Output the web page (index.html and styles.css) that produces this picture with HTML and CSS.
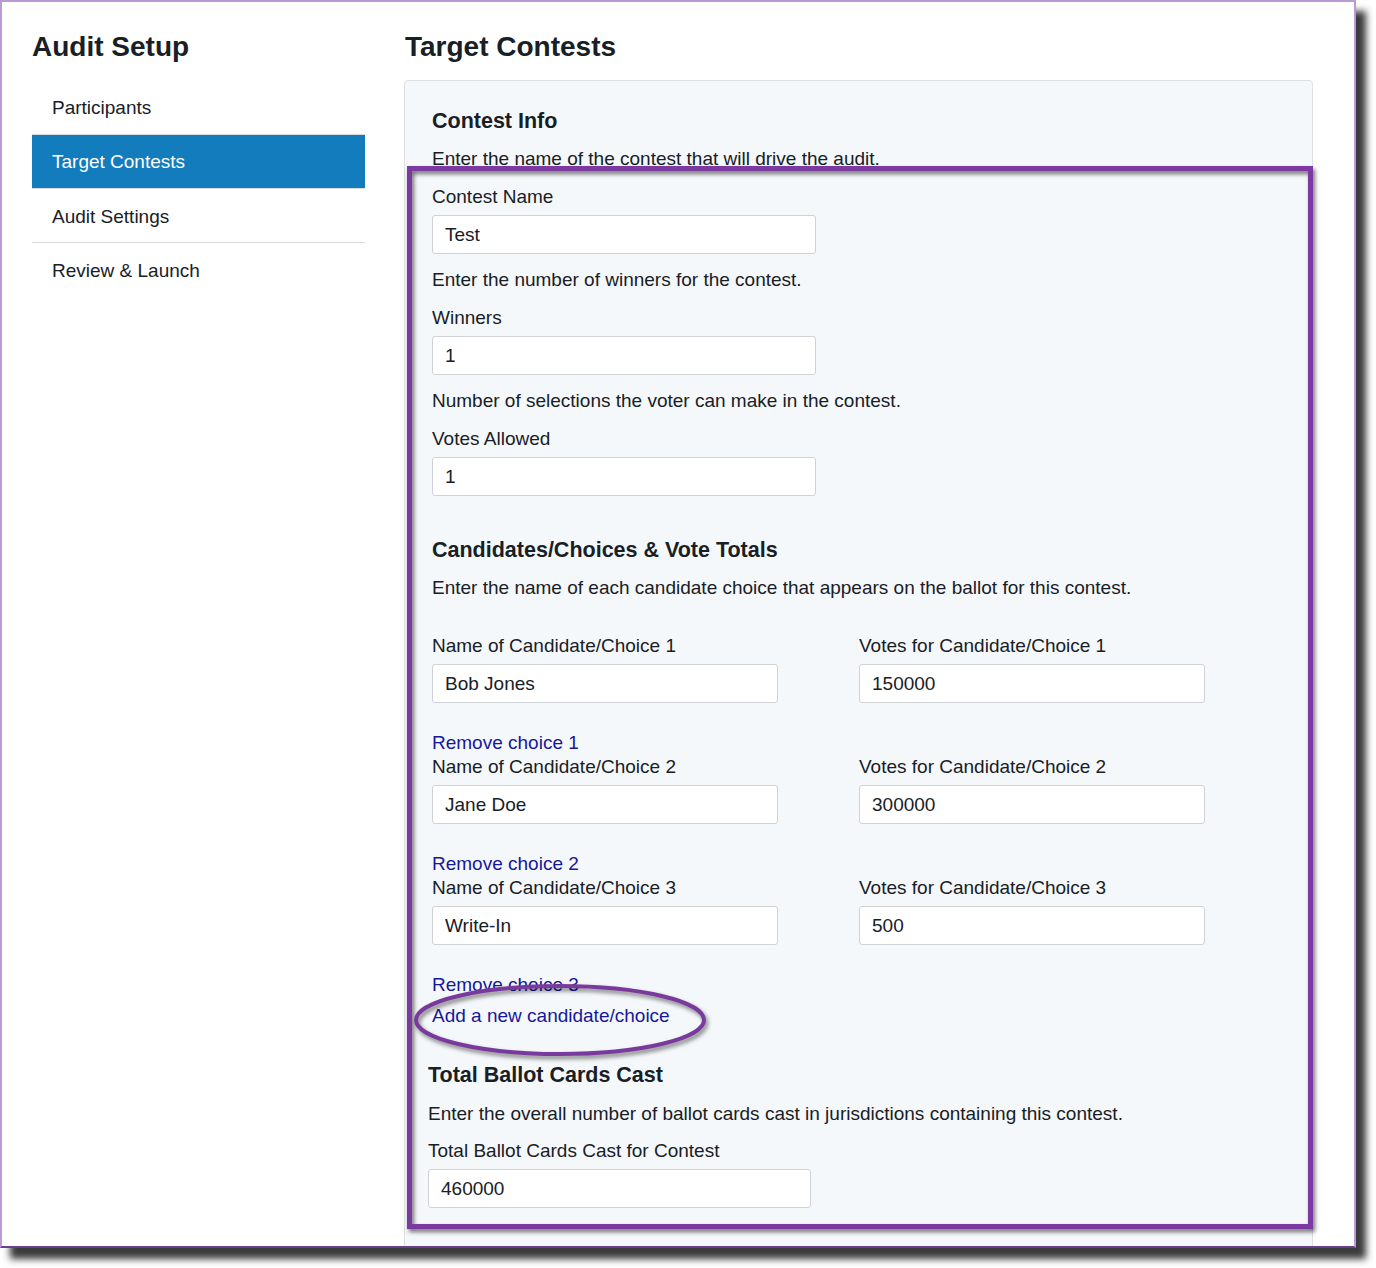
FILE: index.html
```html
<!DOCTYPE html>
<html lang="en">
<head>
<meta charset="utf-8">
<title>Audit Setup - Target Contests</title>
<link rel="stylesheet" href="styles.css">
</head>
<body>
<div class="frame">
  <div class="layout">
    <aside class="sidebar">
      <h1 class="page-title">Audit Setup</h1>
      <nav class="nav">
        <div class="nav-item">Participants</div>
        <div class="nav-item active">Target Contests</div>
        <div class="nav-item lower">Audit Settings</div>
        <div class="nav-item lower last">Review &amp; Launch</div>
      </nav>
    </aside>
    <main class="main">
      <h1 class="page-title">Target Contests</h1>
      <section class="card">
        <h2 class="section-title">Contest Info</h2>
        <p class="help">Enter the name of the contest that will drive the audit.</p>
        <label class="label">Contest Name</label>
        <div class="input wide">Test</div>
        <p class="help">Enter the number of winners for the contest.</p>
        <label class="label">Winners</label>
        <div class="input wide">1</div>
        <p class="help">Number of selections the voter can make in the contest.</p>
        <label class="label">Votes Allowed</label>
        <div class="input wide">1</div>

        <h2 class="section-title spaced">Candidates/Choices &amp; Vote Totals</h2>
        <p class="help">Enter the name of each candidate choice that appears on the ballot for this contest.</p>

        <div class="choices">
          <div class="choice-row">
            <div class="field">
              <label class="label">Name of Candidate/Choice 1</label>
              <div class="input">Bob Jones</div>
            </div>
            <div class="field">
              <label class="label">Votes for Candidate/Choice 1</label>
              <div class="input">150000</div>
            </div>
          </div>
          <a class="link">Remove choice 1</a>
          <div class="choice-row">
            <div class="field">
              <label class="label">Name of Candidate/Choice 2</label>
              <div class="input">Jane Doe</div>
            </div>
            <div class="field">
              <label class="label">Votes for Candidate/Choice 2</label>
              <div class="input">300000</div>
            </div>
          </div>
          <a class="link">Remove choice 2</a>
          <div class="choice-row">
            <div class="field">
              <label class="label">Name of Candidate/Choice 3</label>
              <div class="input">Write-In</div>
            </div>
            <div class="field">
              <label class="label">Votes for Candidate/Choice 3</label>
              <div class="input">500</div>
            </div>
          </div>
          <a class="link">Remove choice 3</a>
          <a class="link add">Add a new candidate/choice</a>
        </div>

        <div class="totals">
          <h2 class="section-title">Total Ballot Cards Cast</h2>
          <p class="help">Enter the overall number of ballot cards cast in jurisdictions containing this contest.</p>
          <label class="label">Total Ballot Cards Cast for Contest</label>
          <div class="input total">460000</div>
        </div>
      </section>
    </main>
  </div>

  <div class="highlight-box"></div>
  <svg class="highlight-ellipse" width="310" height="90" viewBox="0 0 310 90" aria-hidden="true">
    <ellipse cx="150" cy="42" rx="144" ry="34" fill="none" stroke="#7a3a9d" stroke-width="4"/>
  </svg>
</div>
</body>
</html>
```

FILE: styles.css
```css
* { box-sizing: border-box; }

html, body {
  margin: 0;
  padding: 0;
  background: #ffffff;
}

body {
  font-family: "Liberation Sans", Arial, Helvetica, sans-serif;
  color: #182026;
  padding-bottom: 20px;
  min-height: 1268px;
}

.frame {
  position: relative;
  width: 1356px;
  height: 1248px;
  background: #ffffff;
  border-top: 2px solid #b99bd3;
  border-left: 2px solid #b99bd3;
  border-right: 2px solid #b99bd3;
  border-bottom: 2px solid #6b3d8d;
  box-shadow: 10px 11px 7px rgba(25, 25, 25, 0.85);
  overflow: hidden;
}

.layout {
  display: flex;
  padding: 28px 0 0 30px;
}

.sidebar {
  width: 333px;
  flex: none;
}

.page-title {
  margin: 0;
  font-size: 28px;
  line-height: 34px;
  font-weight: bold;
  color: #182026;
}

.nav {
  margin-top: 17px;
}

.nav-item {
  height: 54px;
  padding-left: 20px;
  font-size: 19px;
  line-height: 54px;
  border-bottom: 1px solid #d8dbde;
  color: #182026;
}

.nav-item.lower {
  line-height: 55px;
}

.nav-item.active {
  background: #137cbd;
  color: #ffffff;
}

.nav-item.last {
  border-bottom: none;
}

.main {
  margin-left: 39px;
  width: 909px;
  flex: none;
}

.main .page-title {
  margin-left: 1px;
}

.card {
  margin-top: 16px;
  width: 909px;
  height: 1300px;
  background: #f5f8fa;
  border: 1px solid #dce0e3;
  border-radius: 4px;
  padding: 28px 27px 27px;
}

.section-title {
  margin: 0 0 14px;
  font-size: 21.5px;
  line-height: 24px;
  font-weight: bold;
  color: #182026;
}

.section-title.spaced {
  margin-top: 42px;
}

.help {
  margin: 0 0 14px;
  font-size: 19px;
  line-height: 24px;
}

.label {
  display: block;
  margin: 0 0 6px;
  font-size: 19px;
  line-height: 24px;
}

.input {
  height: 39px;
  width: 346px;
  background: #ffffff;
  border: 1px solid #cfd3d7;
  border-radius: 3px;
  padding: 0 12px;
  font-size: 19px;
  line-height: 37px;
  color: #182026;
  margin-bottom: 14px;
}

.input.wide {
  width: 384px;
}

.choices {
  margin-top: 34px;
}

.choice-row {
  display: grid;
  grid-template-columns: 346px 346px;
  column-gap: 81px;
}

.choice-row .input {
  margin-bottom: 28px;
}

.link {
  display: block;
  font-size: 19px;
  line-height: 24px;
  color: #17179b;
  text-decoration: none;
}

.link.add {
  margin-top: 7px;
}

.totals {
  margin-top: 35px;
  margin-left: -4px;
}

.totals .section-title {
  margin-bottom: 15px;
}

.totals .help {
  margin-bottom: 13px;
}

.input.total {
  width: 383px;
}

.highlight-box {
  position: absolute;
  left: 405px;
  top: 164px;
  width: 906px;
  height: 1063px;
  border: 5px solid #7b3a9f;
  filter: drop-shadow(2px 3px 2px rgba(0, 0, 0, 0.55));
  pointer-events: none;
}

.highlight-ellipse {
  position: absolute;
  left: 408px;
  top: 976px;
  filter: drop-shadow(2px 3px 2px rgba(0, 0, 0, 0.5));
  pointer-events: none;
}
```
